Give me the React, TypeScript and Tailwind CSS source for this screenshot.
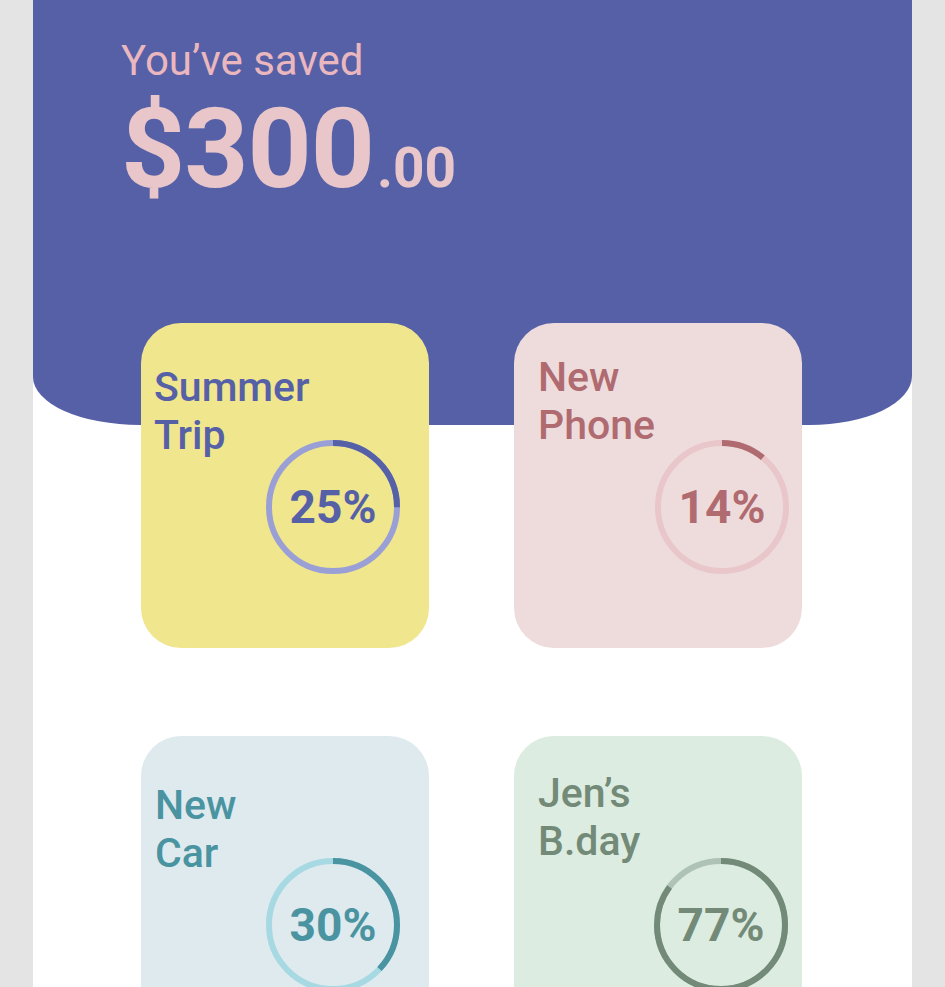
const goals = [
  {
    title: ["Summer", "Trip"],
    pct: "25%",
    arc: 0.25,
    card: "bg-[#efe68e] pt-[40px] pl-[13px]",
    text: "text-[#5660a6]",
    ringWrap: "-mt-[19px] ml-[112px]",
    track: "#9aa0d6",
    fill: "#5660a6",
  },
  {
    title: ["New", "Phone"],
    pct: "14%",
    arc: 0.11,
    card: "bg-[#eedcdd] pt-[30px] pl-[24px]",
    text: "text-[#b06b70]",
    ringWrap: "-mt-[9px] ml-[117px]",
    track: "#e8c6ca",
    fill: "#b06b70",
  },
  {
    title: ["New", "Car"],
    pct: "30%",
    arc: 0.37,
    card: "bg-[#deeaee] pt-[45px] pl-[14px]",
    text: "text-[#4a93a1]",
    ringWrap: "-mt-[19px] ml-[111px]",
    track: "#a7d9e3",
    fill: "#4a93a1",
  },
  {
    title: ["Jen’s", "B.day"],
    pct: "77%",
    arc: 0.85,
    card: "bg-[#dcece0] pt-[33px] pl-[24px]",
    text: "text-[#728a77]",
    ringWrap: "-mt-[7px] ml-[116px]",
    track: "#aec2b5",
    fill: "#728a77",
  },
];

function Ring({ arc, track, fill }: { arc: number; track: string; fill: string }) {
  const r = 64;
  const c = 2 * Math.PI * r;
  return (
    <svg width="134" height="134" viewBox="0 0 134 134" className="absolute inset-0">
      <circle cx="67" cy="67" r={r} fill="none" stroke={track} strokeWidth="6" />
      <circle
        cx="67"
        cy="67"
        r={r}
        fill="none"
        stroke={fill}
        strokeWidth="6"
        strokeDasharray={`${c * arc} ${c}`}
        transform="rotate(-90 67 67)"
      />
    </svg>
  );
}

export default function App() {
  return (
    <div className="min-h-screen bg-[#e4e4e4] font-['Roboto','Liberation_Sans',sans-serif]">
      <div className="mx-auto w-[879px] min-h-[1100px] bg-white">
        {/* header */}
        <div className="h-[425px] bg-[#5660a6] pl-[88px] pt-[37px] rounded-bl-[107px_48px] rounded-br-[102px_49px]">
          <p className="text-[42px] leading-[48px] text-[#eab7bf]">You’ve saved</p>
          <div className="flex items-baseline mt-[14px] text-[#e8c6ca] font-bold">
            <span className="text-[112px] leading-[100px] tracking-[-1px]">$300</span>
            <span className="text-[55px] leading-[60px] ml-[3px]">.00</span>
          </div>
        </div>

        {/* goals */}
        <div className="-mt-[102px] ml-[108px] grid grid-cols-[288px_288px] gap-x-[85px] gap-y-[88px]">
          {goals.map((g) => (
            <div key={g.pct} className={`h-[325px] rounded-[40px] flex flex-col ${g.card}`}>
              <p className={`text-[41px] leading-[48px] font-medium ${g.text}`}>
                {g.title[0]}
                <br />
                {g.title[1]}
              </p>
              <div className={`relative w-[134px] h-[134px] flex items-center justify-center ${g.ringWrap}`}>
                <Ring arc={g.arc} track={g.track} fill={g.fill} />
                <span className={`relative text-[46px] leading-none font-bold ${g.text}`}>{g.pct}</span>
              </div>
            </div>
          ))}
        </div>
      </div>
    </div>
  );
}
